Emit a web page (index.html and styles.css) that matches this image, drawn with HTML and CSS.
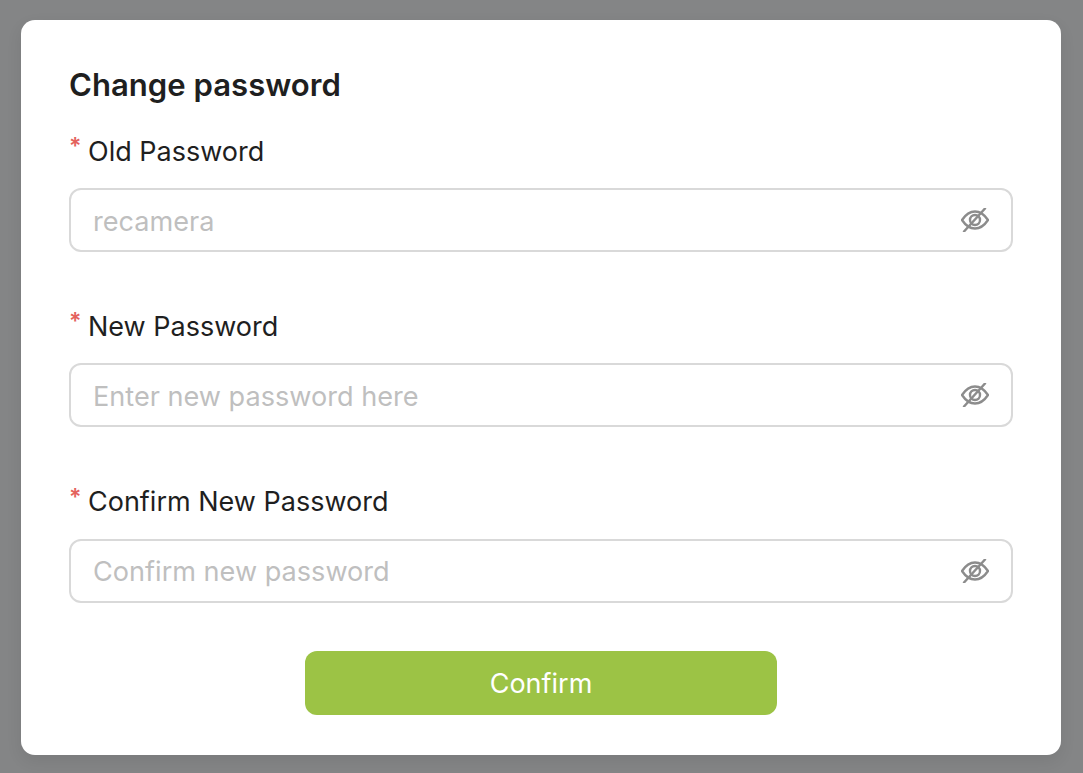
FILE: index.html
```html
<!DOCTYPE html>
<html lang="en">
<head>
    <meta charset="UTF-8">
    <meta name="viewport" content="width=device-width, initial-scale=1.0">
    <title>Change password</title>
    <link rel="stylesheet" href="styles.css">
</head>
<body>
    <div class="overlay">
        <div class="dialog">
            <h2>Change password</h2>
            <form>
                <div class="form-group">
                    <label><span class="required">*</span>Old Password</label>
                    <div class="input-wrap">
                        <input type="password" placeholder="recamera">
                        <svg class="eye-icon" viewBox="0 0 28 24" fill="none" stroke="#8c8c8c" stroke-width="2.4" stroke-linecap="round" stroke-linejoin="round">
                            <path d="M1 12C5 6 9 3.500 14 3.500s9 2.500 13 8.500C23 18 19 20.500 14 20.500S5 18 1 12z"/>
                            <circle cx="14" cy="12" r="5"/>
                            <path d="M24 0.500L3 23.500"/>
                        </svg>
                    </div>
                </div>
                <div class="form-group">
                    <label><span class="required">*</span>New Password</label>
                    <div class="input-wrap">
                        <input type="password" placeholder="Enter new password here">
                        <svg class="eye-icon" viewBox="0 0 28 24" fill="none" stroke="#8c8c8c" stroke-width="2.4" stroke-linecap="round" stroke-linejoin="round">
                            <path d="M1 12C5 6 9 3.500 14 3.500s9 2.500 13 8.500C23 18 19 20.500 14 20.500S5 18 1 12z"/>
                            <circle cx="14" cy="12" r="5"/>
                            <path d="M24 0.500L3 23.500"/>
                        </svg>
                    </div>
                </div>
                <div class="form-group">
                    <label><span class="required">*</span>Confirm New Password</label>
                    <div class="input-wrap">
                        <input type="password" placeholder="Confirm new password">
                        <svg class="eye-icon" viewBox="0 0 28 24" fill="none" stroke="#8c8c8c" stroke-width="2.4" stroke-linecap="round" stroke-linejoin="round">
                            <path d="M1 12C5 6 9 3.500 14 3.500s9 2.500 13 8.500C23 18 19 20.500 14 20.500S5 18 1 12z"/>
                            <circle cx="14" cy="12" r="5"/>
                            <path d="M24 0.500L3 23.500"/>
                        </svg>
                    </div>
                </div>
                <div class="actions">
                    <button type="button" class="btn-confirm">Confirm</button>
                </div>
            </form>
        </div>
    </div>
</body>
</html>
```

FILE: styles.css
```css
* {
    box-sizing: border-box;
}

html, body {
    margin: 0;
    height: 100%;
}

body {
    font-family: Inter, "Liberation Sans", sans-serif;
    background: #848586;
    overflow: hidden;
}

.overlay {
    height: 773px;
    padding: 20px 22px 18px 21px;
}

.dialog {
    height: 735px;
    padding: 47px 48px 0 48px;
    background: #fff;
    border-radius: 14px;
    box-shadow: 0 6px 16px rgba(0, 0, 0, 0.08);
}

.dialog h2 {
    margin: 0 0 31px;
    font-size: 31.1px;
    line-height: 36px;
    font-weight: 600;
    color: #1f1f1f;
}

.form-group {
    margin-bottom: 57.4px;
}

label {
    display: flex;
    height: 34px;
    margin-bottom: 20px;
    align-items: center;
    font-size: 27px;
    color: #1f1f1f;
}

.required {
    width: 19px;
    margin-top: -2px;
    color: #e4625d;
    font-size: 23px;
    font-weight: 600;
    align-self: flex-start;
}

.input-wrap {
    position: relative;
}

input {
    display: block;
    width: 100%;
    height: 64px;
    padding: 2px 70px 0 22px;
    border: 2px solid #d9d9d9;
    border-radius: 12px;
    background: #fff;
    font-family: inherit;
    font-size: 27.1px;
    outline: none;
}

input::placeholder {
    color: #bfbfbf;
    opacity: 1;
}

.eye-icon {
    position: absolute;
    right: 24px;
    top: 20px;
    width: 28px;
    height: 24px;
}

.actions {
    display: flex;
    justify-content: center;
    margin-top: -9.4px;
}

.btn-confirm {
    width: 472px;
    height: 64px;
    padding-top: 2px;
    border: none;
    border-radius: 12px;
    background: #9cc345;
    color: #fff;
    font-family: inherit;
    font-size: 27px;
    cursor: pointer;
}
```
